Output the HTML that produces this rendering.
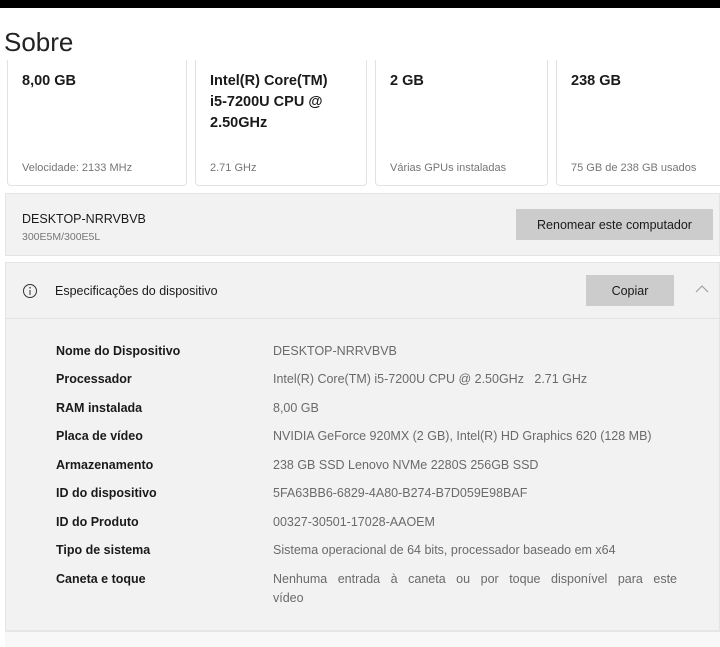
<html><head><style>
body{margin:0;width:720px;height:647px;background:#fff;font-family:"Liberation Sans",sans-serif;position:relative;overflow:hidden;color:#1a1a1a}
.a{position:absolute}
.card{position:absolute;top:60px;height:125px;background:#fff;border:1px solid #e2e2e2;border-top:none;border-radius:0 0 4px 4px}
.big{position:absolute;left:14px;top:11px;font-size:14.5px;font-weight:bold;line-height:21px;color:#1a1a1a}
.sm{position:absolute;left:14px;top:102px;font-size:11px;color:#767676}
.l{position:absolute;left:56px;font-size:12.5px;font-weight:bold;color:#1a1a1a}
.v{position:absolute;left:273px;font-size:12.5px;color:#6a6a6a}
</style></head><body>
<div class="a" style="left:0;top:0;width:720px;height:8px;background:#000"></div>
<div class="a" style="left:4px;top:27px;font-size:26px;color:#222">Sobre</div>
<div class="card" style="left:7px;width:178px"><div class="big">8,00 GB</div><div class="sm">Velocidade: 2133 MHz</div></div>
<div class="card" style="left:195px;width:170px"><div class="big">Intel(R) Core(TM)<br>i5-7200U CPU @<br>2.50GHz</div><div class="sm">2.71 GHz</div></div>
<div class="card" style="left:375px;width:171px"><div class="big">2 GB</div><div class="sm">Várias GPUs instaladas</div></div>
<div class="card" style="left:556px;width:170px"><div class="big">238 GB</div><div class="sm">75 GB de 238 GB usados</div></div>
<div class="a" style="left:5px;top:193px;width:715px;height:63px;background:#f2f2f2;border:1px solid #e4e4e4;box-sizing:border-box"></div>
<div class="a" style="left:22px;top:212px;font-size:12.5px">DESKTOP-NRRVBVB</div>
<div class="a" style="left:22px;top:231px;font-size:10.5px;color:#777">300E5M/300E5L</div>
<div class="a" style="left:516px;top:209px;width:197px;height:31px;background:#cccccc;font-size:12.5px;line-height:33px;text-align:center">Renomear este computador</div>
<div class="a" style="left:5px;top:262px;width:715px;height:368px;background:#f2f2f2;border:1px solid #e4e4e4;border-bottom:none;box-sizing:border-box"></div>
<div class="a" style="left:5px;top:318px;width:715px;height:1px;background:#e2e2e2"></div>
<div class="a" style="left:5px;top:630px;width:715px;height:2px;background:#e6e6e6"></div>
<div class="a" style="left:5px;top:632px;width:715px;height:15px;background:#f8f8f8"></div>
<svg class="a" style="left:22px;top:283px" width="16" height="16"><circle cx="8" cy="8" r="6.5" fill="none" stroke="#333" stroke-width="1"/><line x1="8" y1="7" x2="8" y2="12" stroke="#333"/><circle cx="8" cy="4.8" r=".8" fill="#333"/></svg>
<div class="a" style="left:55px;top:284px;font-size:12.5px">Especificações do dispositivo</div>
<div class="a" style="left:586px;top:275px;width:88px;height:31px;background:#cccccc;font-size:12.5px;line-height:33px;text-align:center">Copiar</div>
<svg class="a" style="left:695px;top:284px" width="14" height="10"><path d="M1 8 L7 2 L13 8" fill="none" stroke="#999" stroke-width="1"/></svg>
<div class="l" style="top:344px">Nome do Dispositivo</div><div class="v" style="top:344px">DESKTOP-NRRVBVB</div>
<div class="l" style="top:372px">Processador</div><div class="v" style="top:372px">Intel(R) Core(TM) i5-7200U CPU @ 2.50GHz&nbsp;&nbsp;&nbsp;2.71 GHz</div>
<div class="l" style="top:401px">RAM instalada</div><div class="v" style="top:401px">8,00 GB</div>
<div class="l" style="top:429px">Placa de vídeo</div><div class="v" style="top:429px">NVIDIA GeForce 920MX (2 GB), Intel(R) HD Graphics 620 (128 MB)</div>
<div class="l" style="top:458px">Armazenamento</div><div class="v" style="top:458px">238 GB SSD Lenovo NVMe 2280S 256GB SSD</div>
<div class="l" style="top:486px">ID do dispositivo</div><div class="v" style="top:486px">5FA63BB6-6829-4A80-B274-B7D059E98BAF</div>
<div class="l" style="top:515px">ID do Produto</div><div class="v" style="top:515px">00327-30501-17028-AAOEM</div>
<div class="l" style="top:543px">Tipo de sistema</div><div class="v" style="top:543px">Sistema operacional de 64 bits, processador baseado em x64</div>
<div class="l" style="top:572px">Caneta e toque</div>
<div class="v" style="top:572px;width:404px;text-align:justify;text-align-last:justify">Nenhuma entrada à caneta ou por toque disponível para este</div>
<div class="v" style="top:591px">vídeo</div>
</body></html>
